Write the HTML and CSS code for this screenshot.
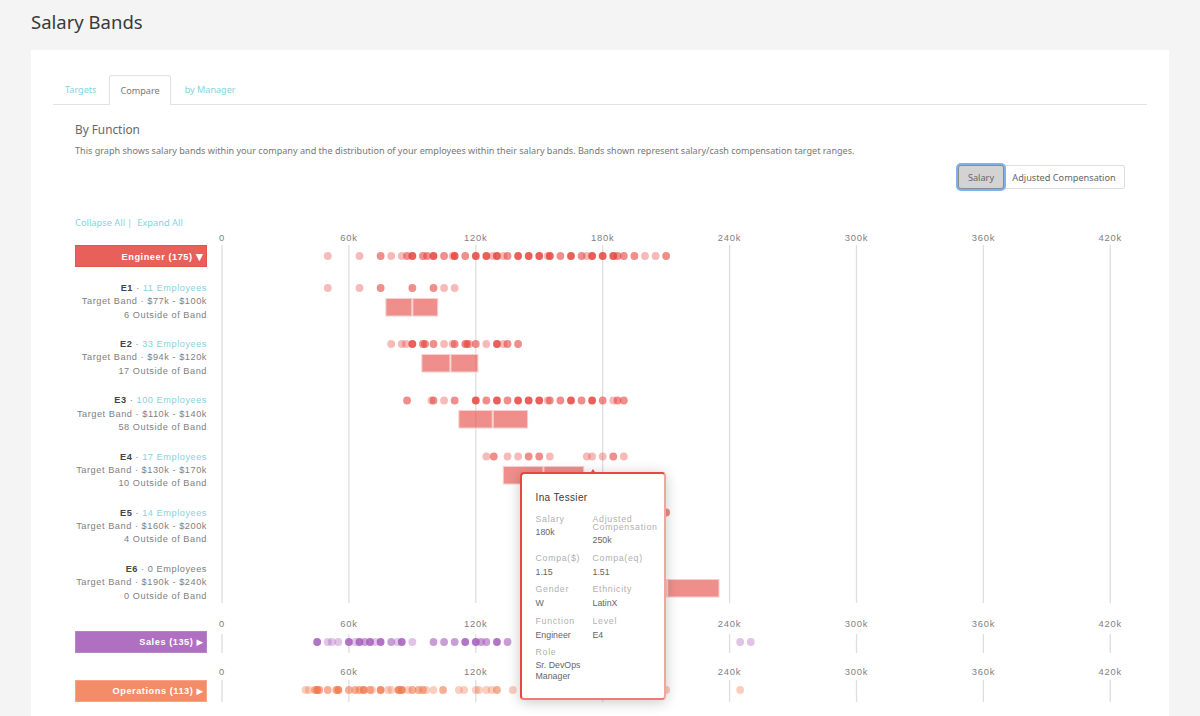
FILE: index.html
```html
<!DOCTYPE html>
<html lang="en">
<head>
    <meta charset="UTF-8">
    <title>Salary Bands</title>
    <link rel="stylesheet" href="styles.css">
</head>
<body>
    <h1 class="page-title">Salary Bands</h1>
    <main class="card">
        <ul class="tabs">
            <li><a href="#">Targets</a></li>
            <li class="active"><a href="#">Compare</a></li>
            <li><a href="#">by Manager</a></li>
        </ul>
        <section class="content">
            <h2>By Function</h2>
            <p class="intro">This graph shows salary bands within your company and the distribution of your employees within their salary bands. Bands shown represent salary/cash compensation target ranges.</p>
            <div class="toggle">
                <button class="selected">Salary</button>
                <button>Adjusted Compensation</button>
            </div>
            <div class="links">
                <a href="#">Collapse All</a><span class="sep">|</span><a href="#">Expand All</a>
            </div>
            <div class="chart">
                <div class="group engineer">
                    <div class="labels">
                        <div class="group-head red">Engineer (175) <span class="arrow">▼</span></div>
                        <div class="level">
                            <div><b>E1</b> · <a href="#">11 Employees</a></div>
                            <div>Target Band · $77k - $100k</div>
                            <div>6 Outside of Band</div>
                        </div>
                        <div class="level">
                            <div><b>E2</b> · <a href="#">33 Employees</a></div>
                            <div>Target Band · $94k - $120k</div>
                            <div>17 Outside of Band</div>
                        </div>
                        <div class="level">
                            <div><b>E3</b> · <a href="#">100 Employees</a></div>
                            <div>Target Band · $110k - $140k</div>
                            <div>58 Outside of Band</div>
                        </div>
                        <div class="level">
                            <div><b>E4</b> · <a href="#">17 Employees</a></div>
                            <div>Target Band · $130k - $170k</div>
                            <div>10 Outside of Band</div>
                        </div>
                        <div class="level">
                            <div><b>E5</b> · <a href="#">14 Employees</a></div>
                            <div>Target Band · $160k - $200k</div>
                            <div>4 Outside of Band</div>
                        </div>
                        <div class="level">
                            <div><b>E6</b> · 0 Employees</div>
                            <div>Target Band · $190k - $240k</div>
                            <div>0 Outside of Band</div>
                        </div>
                    </div>
                    <svg class="plot" id="plot-engineer"></svg>
                </div>
                <div class="group sales">
                    <div class="labels">
                        <div class="group-head purple">Sales (135) <span class="arrow small">▶</span></div>
                    </div>
                    <svg class="plot" id="plot-sales"></svg>
                </div>
                <div class="group operations">
                    <div class="labels">
                        <div class="group-head orange">Operations (113) <span class="arrow small">▶</span></div>
                    </div>
                    <svg class="plot" id="plot-operations"></svg>
                </div>

                <div class="tooltip">
                    <div class="tooltip-name">Ina Tessier</div>
                    <dl class="tooltip-grid">
                        <div><dt>Salary</dt><dd>180k</dd></div>
                        <div><dt>Adjusted Compensation</dt><dd>250k</dd></div>
                        <div><dt>Compa($)</dt><dd>1.15</dd></div>
                        <div><dt>Compa(eq)</dt><dd>1.51</dd></div>
                        <div><dt>Gender</dt><dd>W</dd></div>
                        <div><dt>Ethnicity</dt><dd>LatinX</dd></div>
                        <div><dt>Function</dt><dd>Engineer</dd></div>
                        <div><dt>Level</dt><dd>E4</dd></div>
                        <div><dt>Role</dt><dd>Sr. DevOps Manager</dd></div>
                    </dl>
                </div>
            </div>
        </section>
    </main>
    <script src="script.js"></script>
</body>
</html>
```

FILE: styles.css
```css
html, body {
    height: 716px;
    overflow: hidden;
}

body {
    margin: 0;
    font-family: 'Noto Sans', sans-serif;
    background-color: #f4f4f4;
    color: #444;
}

a {
    color: #85d3e0;
    text-decoration: none;
}

.page-title {
    margin: 0;
    padding: 9px 0 0 31px;
    height: 50px;
    box-sizing: border-box;
    font-size: 18.5px;
    line-height: 26px;
    font-weight: 400;
    color: #3a3a3a;
}

.card {
    margin: 0 31px;
    padding: 25px 22px 0;
    background-color: #fff;
    height: 666px;
    box-sizing: border-box;
    overflow: hidden;
}

.tabs {
    display: flex;
    list-style: none;
    margin: 0;
    padding: 0;
    height: 29px;
    border-bottom: 1px solid #e2e2e2;
    font-size: 9.1px;
}

.tabs li {
    padding: 0 13px 0 12px;
    line-height: 29px;
}

.tabs li.active {
    height: 30px;
    padding: 0 10px 0 10px;
    box-sizing: border-box;
    border: 1px solid #e2e2e2;
    border-bottom: none;
    border-radius: 3px 3px 0 0;
    background-color: #fff;
}

.tabs li.active + li {
    padding-left: 14px;
}

.tabs li.active a {
    color: #777;
}

.content {
    padding: 0 22px;
}

.content h2 {
    margin: 15px 0 0;
    font-size: 11.8px;
    line-height: 18px;
    font-weight: 400;
    color: #666;
}

.intro {
    margin: 6px 0 0;
    font-size: 9.09px;
    line-height: 14px;
    color: #777;
    white-space: nowrap;
}

.toggle {
    display: flex;
    justify-content: flex-end;
    margin-top: 7px;
}

.toggle button {
    width: 121px;
    height: 24px;
    padding: 0;
    font-family: 'Noto Sans', sans-serif;
    font-size: 9.2px;
    color: #666;
    background-color: #fff;
    border: 1px solid #ddd;
    border-left: none;
    border-radius: 0 3px 3px 0;
}

.toggle button.selected {
    width: 46px;
    background-color: #d3d3d3;
    border: 1px solid #8a8a8a;
    border-radius: 3px;
    box-shadow: 0 0 0 2px #7fb0f0;
    position: relative;
}

.links {
    margin-top: 27px;
    font-size: 9.3px;
    line-height: 14px;
}

.links .sep {
    margin: 0 5px 0 2px;
    color: #85d3e0;
}

.chart {
    position: relative;
}

.group {
    display: grid;
    grid-template-columns: 132px 918px;
}

.engineer {
    height: 386px;
}

.sales {
    height: 48px;
}

.operations {
    height: 52px;
}

.labels {
    font-family: 'Liberation Sans', sans-serif;
    font-size: 9.2px;
    letter-spacing: 0.55px;
    line-height: 13.3px;
    color: #808080;
    text-align: right;
    white-space: nowrap;
}

.engineer .labels,
.sales .labels {
    padding-top: 15px;
}

.operations .labels {
    padding-top: 16px;
}

.group-head {
    height: 22px;
    box-sizing: border-box;
    padding-right: 3px;
    line-height: 21px;
    font-weight: bold;
    color: #fff;
    border: 1px solid;
    margin-bottom: 15px;
}

.group-head.red {
    background-color: #e8605a;
    border-color: #e8524c;
}

.group-head.purple {
    background-color: #b070c2;
    border-color: #b884c8;
}

.group-head.orange {
    background-color: #f28d68;
    border-color: #f6a487;
}

.arrow {
    font-family: 'DejaVu Sans', sans-serif;
    font-size: 9.5px;
    letter-spacing: 0;
}

.arrow.small {
    font-size: 8.5px;
}

.level {
    height: 39.9px;
    margin-bottom: 16.3px;
}

.level b {
    color: #444;
}

.plot {
    display: block;
    width: 918px;
    height: 100%;
    overflow: visible;
}

.plot .tick-label {
    font-family: 'Liberation Sans', sans-serif;
    font-size: 9.4px;
    letter-spacing: 0.8px;
    fill: #808080;
    text-anchor: middle;
}

.plot .grid-line {
    stroke: #dedede;
    stroke-width: 1.3;
}

.plot .band {
    fill: #e54e49;
    fill-opacity: 0.63;
    stroke: #f8cfcc;
    stroke-width: 1;
}

/* Tooltip */
.tooltip {
    position: absolute;
    left: 444.5px;
    top: 242px;
    width: 146px;
    height: 228px;
    box-sizing: border-box;
    padding: 17px 14px 0;
    background-color: #fff;
    border: 2px solid #e8463f;
    border-right-color: #f2a5a0;
    border-bottom-color: #ee7b75;
    border-radius: 4px;
    box-shadow: 0 2px 14px rgba(0, 0, 0, 0.22);
    font-family: 'Liberation Sans', sans-serif;
}

.tooltip::before {
    content: "";
    position: absolute;
    left: 69px;
    top: -5px;
    border-left: 2px solid transparent;
    border-right: 2px solid transparent;
    border-bottom: 3px solid #e8463f;
}

.tooltip-name {
    font-size: 10px;
    line-height: 14px;
    letter-spacing: 0.35px;
    color: #3a3a3a;
}

.tooltip-grid {
    display: grid;
    grid-template-columns: 57px 1fr;
    align-items: start;
    margin: 9px 0 0;
    font-size: 8.8px;
    line-height: 11px;
}

.tooltip-grid > div {
    margin-bottom: 8.7px;
    height: 22.7px;
}

.tooltip-grid > div:nth-child(1) {
    margin-bottom: 0;
}

.tooltip-grid > div:nth-child(2) {
    height: 31px;
    margin-bottom: 8px;
}

.tooltip-grid dt {
    letter-spacing: 0.7px;
    line-height: 8px;
    padding: 1px 0 3px;
    color: #b0b0b0;
}

.tooltip-grid dd {
    margin: 0;
    padding-top: 2px;
    color: #666;
}

.tooltip-grid > div:nth-child(-n+2) dd,
.tooltip-grid > div:last-child dd {
    padding-top: 1px;
}

.tooltip-grid > div:last-child {
    width: 60px;
}
```

FILE: script.js
```js
// 1k of salary = 2.115px, axis 0 sits 15px into the svg
const SCALE = 2.115;
const ZERO = 15;
const TICKS = [0, 60, 120, 180, 240, 300, 360, 420];
const NS = 'http://www.w3.org/2000/svg';
const OPACITY = { l: 0.36, m: 0.6, d: 0.85 };

function x(k) {
    return ZERO + k * SCALE;
}

function add(svg, tag, attrs, text) {
    const el = document.createElementNS(NS, tag);
    for (const key in attrs) el.setAttribute(key, attrs[key]);
    if (text) el.textContent = text;
    svg.appendChild(el);
}

// dots are written as "salary level", e.g. "90d"
function drawDots(svg, row, color) {
    row.dots.split(' ').forEach(function (d) {
        const level = d.slice(-1);
        add(svg, 'circle', {
            cx: x(parseFloat(d)),
            cy: row.y,
            r: 3.9,
            fill: color,
            'fill-opacity': OPACITY[level]
        });
    });
}

function drawBand(svg, band) {
    const y = band.y;
    add(svg, 'rect', { class: 'band', x: x(band.from), y: y, width: x(band.mid) - x(band.from) - 0.5, height: 17.5 });
    add(svg, 'rect', { class: 'band', x: x(band.mid) + 0.5, y: y, width: x(band.to) - x(band.mid) - 0.5, height: 17.5 });
}

function drawPlot(id, plot) {
    const svg = document.getElementById(id);
    TICKS.forEach(function (t) {
        add(svg, 'text', { class: 'tick-label', x: x(t), y: plot.labelY }, t === 0 ? '0' : t + 'k');
        add(svg, 'line', { class: 'grid-line', x1: x(t), x2: x(t), y1: plot.top, y2: plot.bottom });
    });
    (plot.bands || []).forEach(function (b) { drawBand(svg, b); });
    plot.rows.forEach(function (r) { drawDots(svg, r, plot.color); });
}

drawPlot('plot-engineer', {
    color: '#e5433d', labelY: 11, top: 15, bottom: 373,
    bands: [
        { y: 68.5, from: 77.5, mid: 90, to: 102 },
        { y: 124.5, from: 94.5, mid: 108, to: 121 },
        { y: 180.5, from: 112, mid: 128, to: 144.5 },
        { y: 236.5, from: 133, mid: 152, to: 171 },
        { y: 349.5, from: 190, mid: 210.5, to: 235 }
    ],
    rows: [
        { y: 26, dots: '50l 65l 75m 80l 85l 87.5m 90d 95m 97m 100d 105m 109l 110d 115m 120d 125d 128l 130d 133l 135m 140d 145d 150d 154l 155d 160m 165d 170m 172.5l 175d 180d 185d 187m 190m 195m 200l 205l 210m' },
        { y: 58, dots: '50l 65l 75m 90m 100m 105l 110l' },
        { y: 114, dots: '80l 85l 87l 90d 95m 96m 100m 105l 109l 110m 115m 116m 117l 120m 125l 130d 133l 135m 140m' },
        { y: 170.5, dots: '87.5m 99l 100m 105l 110m 120d 125m 130d 135m 140d 145d 150d 154l 155m 160m 165d 170m 175d 180m 185l 187m 190m' },
        { y: 226.5, dots: '125l 128.5m 135l 140l 145m 150m 155l 172.5l 175l 180l 185m 190l' },
        { y: 282.5, dots: '210m' }
    ]
});

drawPlot('plot-sales', {
    color: '#a65bbd', labelY: 11, top: 18, bottom: 37,
    rows: [
        { y: 26, dots: '45d 50l 52l 55l 60d 63l 65d 67.5m 70d 72.5l 75d 80m 83l 85d 90l 100m 105m 110m 115d 120d 122.5m 125m 130d 135m 245l 250l' }
    ]
});

drawPlot('plot-operations', {
    color: '#f07a4e', labelY: 11, top: 16, bottom: 38,
    rows: [
        { y: 26, dots: '39.5l 41l 44m 45d 46m 50m 54m 55d 60m 63m 65m 67d 70m 71l 75d 78.5l 80l 83.5d 85d 88l 90m 93m 95m 96.5l 100l 104.5m 112l 114.5l 120l 121.5l 125l 127.5l 130m 137.5l 144l 210l 245l' }
    ]
});
```
